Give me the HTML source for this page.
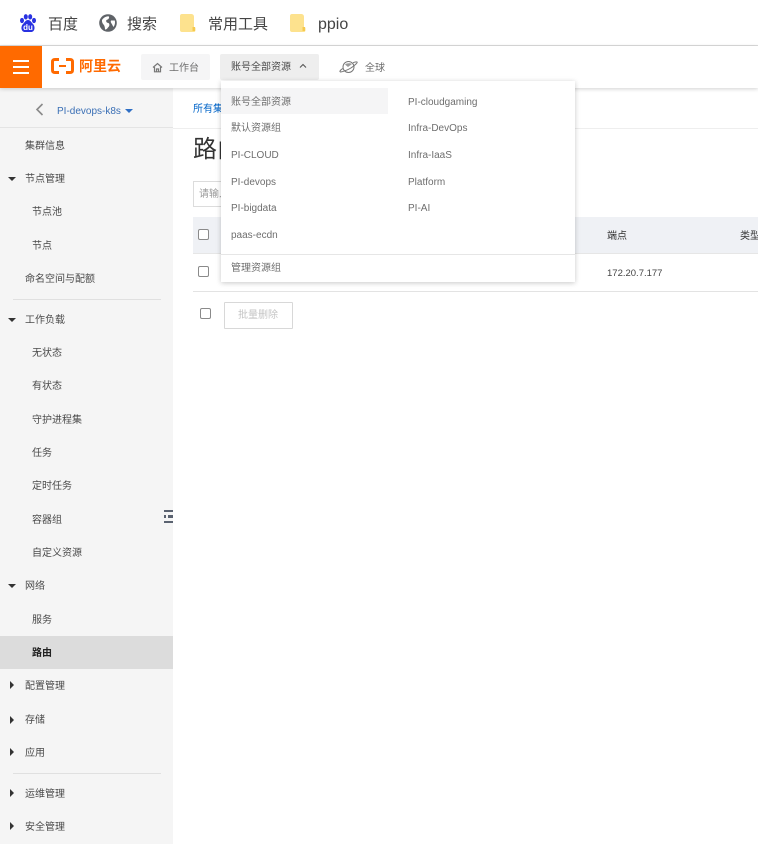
<!DOCTYPE html>
<html lang="zh">
<head>
<meta charset="utf-8">
<title>路由</title>
<style>
*{box-sizing:border-box}
html,body{margin:0;padding:0;width:758px;height:844px;overflow:hidden;background:#fff}
body{position:relative;font-family:"Liberation Sans","Noto Sans CJK SC",sans-serif;font-size:10px;color:#333}
.a{position:absolute}
.t{position:absolute;white-space:nowrap;line-height:14px;height:14px;margin-top:1px}
.x{margin-top:2px}
.s{color:#4a4a4a}
.m{color:#6e6e6e}
.bm{font-size:15px;line-height:20px;height:20px;color:#444;top:14px}
.cb{position:absolute;width:11px;height:11px;border:1px solid #8a8a8a;border-radius:2px;background:#fff}
.down{position:absolute;left:8px;width:0;height:0;border-left:4px solid transparent;border-right:4px solid transparent;border-top:4px solid #333}
.right{position:absolute;left:10px;width:0;height:0;border-top:4px solid transparent;border-bottom:4px solid transparent;border-left:4px solid #333}
</style>
</head>
<body>
<!-- bookmarks bar -->
<div class="a" style="left:0;top:45px;width:758px;height:1px;background:#dcdcdc"></div>
<svg class="a" style="left:19px;top:14px" width="18" height="18" viewBox="0 0 18 18">
<ellipse cx="3" cy="6.500" rx="2" ry="2.600" fill="#2932e1"/>
<ellipse cx="6.800" cy="2.800" rx="2" ry="2.700" fill="#2932e1"/>
<ellipse cx="11.200" cy="2.800" rx="2" ry="2.700" fill="#2932e1"/>
<ellipse cx="15" cy="6.500" rx="2" ry="2.600" fill="#2932e1"/>
<path d="M9 6C6.500 6 6 8 4 10C1.500 12.500 2 18 6 18H12C16 18 16.500 12.500 14 10C12 8 11.500 6 9 6Z" fill="#2932e1"/>
<text x="9" y="16" font-size="8" font-weight="bold" text-anchor="middle" fill="#fff" font-family="Liberation Sans">du</text>
</svg>
<span class="t bm" style="left:48px">百度</span>
<svg class="a" style="left:99px;top:14px" width="18" height="18" viewBox="0 0 18 18">
<circle cx="9" cy="9" r="8.800" fill="#5f6368"/>
<path d="M3 6C5 3 8 2 10 2.500C10.500 4.500 9 5.500 7.500 6C6.500 7.500 8 9 9.500 9C11 10 10.500 12.500 9 13.500C8 15 7 15.800 6 15.500C6 13.500 5.500 11.500 4.500 10.500C3.500 9.500 2.800 8 3 6Z" fill="#fff"/>
<path d="M12 6.500L15.800 6.500C16.300 8.500 16 11 14.500 13C13.500 11.500 13 10 12.500 9.500C11.800 8.500 11.500 7.500 12 6.500Z" fill="#fff"/>
</svg>
<span class="t bm" style="left:127px">搜索</span>
<svg class="a" style="left:180px;top:14px" width="16" height="18" viewBox="0 0 16 18">
<path d="M2 0H11C13 0 14 1 14 3V13.500H15.500V16C15.500 17 15 18 14 18H2C.8 18 0 17.200 0 16V2C0 .8 .8 0 2 0Z" fill="#fde28e"/>
<rect x="12.500" y="13" width="2.500" height="4" fill="#f5c94f"/>
</svg>
<span class="t bm" style="left:208px">常用工具</span>
<svg class="a" style="left:290px;top:14px" width="16" height="18" viewBox="0 0 16 18">
<path d="M2 0H11C13 0 14 1 14 3V13.500H15.500V16C15.500 17 15 18 14 18H2C.8 18 0 17.200 0 16V2C0 .8 .8 0 2 0Z" fill="#fde28e"/>
<rect x="12.500" y="13" width="2.500" height="4" fill="#f5c94f"/>
</svg>
<span class="t bm" style="left:318px;font-size:16px">ppio</span>

<!-- sidebar bg -->
<div class="a" style="left:0;top:88px;width:173px;height:756px;background:#f5f5f5"></div>

<!-- main content -->
<div class="a" style="left:173px;top:128px;width:585px;height:1px;background:#eee"></div>
<span class="t x" style="left:193px;top:101px;color:#0064c8;width:28px;overflow:hidden">所有集群</span>
<span class="t x" style="left:193px;top:132px;font-size:24px;line-height:32px;height:32px;color:#333;width:28px;overflow:hidden">路由</span>
<div class="a" style="left:193px;top:181px;width:40px;height:26px;border:1px solid #dcdcdc"></div>
<span class="t x" style="left:199px;top:186px;color:#999;width:22px;overflow:hidden">请输入</span>
<div class="a" style="left:193px;top:217px;width:565px;height:37px;background:#eff1f5;border-bottom:1px solid #e6e6e6"></div>
<div class="cb" style="left:198px;top:229px"></div>
<span class="t x" style="left:607px;top:228px;color:#333">端点</span>
<span class="t x" style="left:740px;top:228px;color:#333">类型</span>
<div class="cb" style="left:198px;top:266px"></div>
<span class="t x" style="left:607px;top:265px;color:#444;font-size:9.500px">172.20.7.177</span>
<div class="a" style="left:193px;top:291px;width:565px;height:1px;background:#e3e3e3"></div>
<div class="cb" style="left:200px;top:308px"></div>
<div class="a" style="left:224px;top:302px;width:69px;height:27px;border:1px solid #d8d8d8;border-radius:1px"></div>
<span class="t" style="left:238px;top:308px;color:#c4c4c4">批量删除</span>

<!-- top nav -->
<div class="a" style="left:0;top:46px;width:758px;height:42px;background:#fff;box-shadow:0 1px 4px rgba(0,0,0,.18)"></div>
<div class="a" style="left:0;top:46px;width:42px;height:42px;background:#ff6a00"></div>
<div class="a" style="left:13px;top:60px;width:16px;height:2px;background:#fff"></div>
<div class="a" style="left:13px;top:66px;width:16px;height:2px;background:#fff"></div>
<div class="a" style="left:13px;top:72px;width:16px;height:2px;background:#fff"></div>
<svg class="a" style="left:51px;top:58px" width="23" height="16" viewBox="0 0 23 16">
<path d="M8 1.500H4C2 1.500 1.500 2.500 1.500 4V12C1.500 13.500 2 14.500 4 14.500H8M15 1.500H19C21 1.500 21.500 2.500 21.500 4V12C21.500 13.500 21 14.500 19 14.500H15" fill="none" stroke="#ff6a00" stroke-width="3"/>
<rect x="8" y="7" width="7" height="2" fill="#ff6a00"/>
</svg>
<span class="t" style="left:79px;top:55px;font-size:14px;line-height:20px;height:20px;color:#ff6a00;font-weight:bold">阿里云</span>

<div class="a" style="left:141px;top:54px;width:69px;height:26px;background:#f5f5f6;border-radius:2px"></div>
<svg class="a" style="left:152px;top:62px" width="11" height="11" viewBox="0 0 11 11">
<path d="M1 5.500L5.500 1.500L10 5.500M2.500 5V9.800H8.500V5M4.500 9.800V7H6.500V9.800" fill="none" stroke="#777" stroke-width="1.200"/>
</svg>
<span class="t m" style="left:169px;top:61px">工作台</span>

<div class="a" style="left:220px;top:54px;width:99px;height:26px;background:#eee;border-radius:2px"></div>
<span class="t s" style="left:231px;top:60px">账号全部资源</span>
<svg class="a" style="left:299px;top:63px" width="8" height="6" viewBox="0 0 8 6">
<path d="M1 4.500L4 1.500L7 4.500" fill="none" stroke="#555" stroke-width="1.100"/>
</svg>

<svg class="a" style="left:339px;top:58px" width="20" height="18" viewBox="0 0 20 18">
<circle cx="9.500" cy="9" r="5.500" fill="none" stroke="#777" stroke-width="1"/>
<path d="M1 14C4 14 11 11 14 8.500C16 7 19 4.500 18 4C17.500 3.700 15.500 4 14 4.800M1 14C.5 12.500 2 11.500 4 10.500" fill="none" stroke="#777" stroke-width="1"/>
<path d="M6 6.500C8 5 11 5 13 6L9 9Z" fill="#999"/>
</svg>
<span class="t m" style="left:365px;top:61px">全球</span>

<!-- sidebar content -->
<svg class="a" style="left:35px;top:103px" width="9" height="13" viewBox="0 0 9 13">
<path d="M7.500 1L2 6.500L7.500 12" fill="none" stroke="#8a8a8a" stroke-width="1.600"/>
</svg>
<span class="t" style="left:57px;top:104px;color:#3a6fb5">PI-devops-k8s</span>
<div class="a" style="left:125px;top:109px;width:0;height:0;border-left:4px solid transparent;border-right:4px solid transparent;border-top:4px solid #2f6fc5"></div>
<div class="a" style="left:0;top:127px;width:173px;height:1px;background:#e4e4e4"></div>

<span class="t s" style="left:25px;top:139px">集群信息</span>
<div class="down" style="top:177px"></div>
<span class="t s" style="left:25px;top:172px">节点管理</span>
<span class="t s" style="left:32px;top:205px">节点池</span>
<span class="t s" style="left:32px;top:239px">节点</span>
<span class="t s" style="left:25px;top:272px">命名空间与配额</span>
<div class="a" style="left:13px;top:299px;width:148px;height:1px;background:#e0e0e0"></div>
<div class="down" style="top:318px"></div>
<span class="t s" style="left:25px;top:313px">工作负载</span>
<span class="t s" style="left:32px;top:346px">无状态</span>
<span class="t s" style="left:32px;top:379px">有状态</span>
<span class="t s" style="left:32px;top:413px">守护进程集</span>
<span class="t s" style="left:32px;top:446px">任务</span>
<span class="t s" style="left:32px;top:479px">定时任务</span>
<span class="t s" style="left:32px;top:513px">容器组</span>
<div class="a" style="left:164px;top:510px;width:9px;height:2px;background:#5a6270"></div>
<div class="a" style="left:164px;top:515px;width:2px;height:3px;background:#5a6270"></div>
<div class="a" style="left:168px;top:515px;width:5px;height:3px;background:#5a6270"></div>
<div class="a" style="left:164px;top:521px;width:9px;height:2px;background:#5a6270"></div>
<span class="t s" style="left:32px;top:546px">自定义资源</span>
<div class="down" style="top:584px"></div>
<span class="t s" style="left:25px;top:579px">网络</span>
<span class="t s" style="left:32px;top:613px">服务</span>
<div class="a" style="left:0;top:636px;width:173px;height:33px;background:#dcdcdc"></div>
<span class="t" style="left:32px;top:646px;color:#222;font-weight:bold">路由</span>
<div class="right" style="top:681px"></div>
<span class="t s" style="left:25px;top:679px">配置管理</span>
<div class="right" style="top:716px"></div>
<span class="t s" style="left:25px;top:713px">存储</span>
<div class="right" style="top:748px"></div>
<span class="t s" style="left:25px;top:746px">应用</span>
<div class="a" style="left:13px;top:773px;width:148px;height:1px;background:#e0e0e0"></div>
<div class="right" style="top:789px"></div>
<span class="t s" style="left:25px;top:787px">运维管理</span>
<div class="right" style="top:822px"></div>
<span class="t s" style="left:25px;top:820px">安全管理</span>

<!-- dropdown -->
<div class="a" style="left:221px;top:81px;width:354px;height:201px;background:#fff;box-shadow:0 1px 5px rgba(0,0,0,.22)"></div>
<div class="a" style="left:221px;top:88px;width:167px;height:26px;background:#f5f5f6"></div>
<span class="t m" style="left:231px;top:95px">账号全部资源</span>
<span class="t m" style="left:231px;top:121px">默认资源组</span>
<span class="t m" style="left:231px;top:148px">PI-CLOUD</span>
<span class="t m" style="left:231px;top:175px">PI-devops</span>
<span class="t m" style="left:231px;top:201px">PI-bigdata</span>
<span class="t m" style="left:231px;top:228px">paas-ecdn</span>
<span class="t m" style="left:408px;top:95px">PI-cloudgaming</span>
<span class="t m" style="left:408px;top:121px">Infra-DevOps</span>
<span class="t m" style="left:408px;top:148px">Infra-IaaS</span>
<span class="t m" style="left:408px;top:175px">Platform</span>
<span class="t m" style="left:408px;top:201px">PI-AI</span>
<div class="a" style="left:221px;top:254px;width:354px;height:1px;background:#e6e6e6"></div>
<span class="t m" style="left:231px;top:261px">管理资源组</span>
</body>
</html>
